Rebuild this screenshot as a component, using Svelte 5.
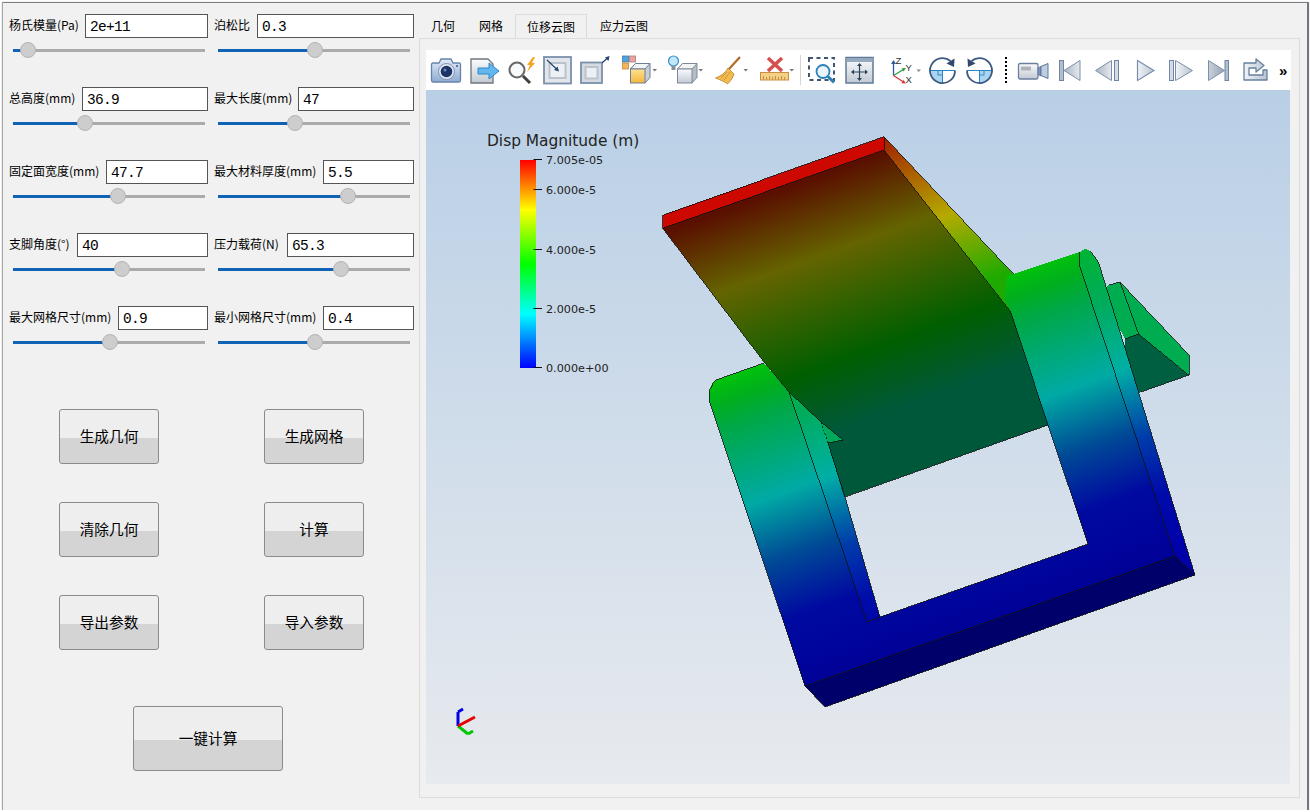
<script lang="ts">
	const fields = [
		[
			{ label: '杨氏模量(Pa)', w: 69, value: '2e+11', pos: 8 },
			{ label: '泊松比', w: 36, value: '0.3', pos: 50.5 }
		],
		[
			{ label: '总高度(mm)', w: 66, value: '36.9', pos: 37.5 },
			{ label: '最大长度(mm)', w: 77, value: '47', pos: 40.2 }
		],
		[
			{ label: '固定面宽度(mm)', w: 90, value: '47.7', pos: 54.7 },
			{ label: '最大材料厚度(mm)', w: 102, value: '5.5', pos: 67.7 }
		],
		[
			{ label: '支脚角度(°)', w: 61, value: '40', pos: 56.8 },
			{ label: '压力载荷(N)', w: 66, value: '65.3', pos: 64 }
		],
		[
			{ label: '最大网格尺寸(mm)', w: 102, value: '0.9', pos: 50.5 },
			{ label: '最小网格尺寸(mm)', w: 102, value: '0.4', pos: 50.5 }
		]
	];
	const actions = ['生成几何', '生成网格', '清除几何', '计算', '导出参数', '导入参数'];
	const tabs = ['几何', '网格', '位移云图', '应力云图'];
	const ticks = [
		{ y: 159, text: '7.005e-05' },
		{ y: 189, text: '6.000e-5' },
		{ y: 249, text: '4.000e-5' },
		{ y: 308, text: '2.000e-5' },
		{ y: 367, text: '0.000e+00' }
	];
</script>

<svg class="defs" width="0" height="0" aria-hidden="true">
	<defs>
		<linearGradient id="gGray" x1="0" y1="0" x2="0" y2="1">
			<stop offset="0" stop-color="#fbfcfd" /><stop offset="1" stop-color="#c2c9d3" />
		</linearGradient>
		<linearGradient id="gSide" x1="0" y1="0" x2="1" y2="0">
			<stop offset="0" stop-color="#f2f4f7" /><stop offset="1" stop-color="#b9c3d0" />
		</linearGradient>
		<linearGradient id="gDark" x1="0" y1="0" x2="1" y2="0">
			<stop offset="0" stop-color="#aab4c2" /><stop offset="1" stop-color="#e6eaef" />
		</linearGradient>
		<linearGradient id="gDarkR" x1="0" y1="0" x2="1" y2="0">
			<stop offset="0" stop-color="#c9d0da" /><stop offset="1" stop-color="#97a4b6" />
		</linearGradient>
		<linearGradient id="gCam" x1="0" y1="0" x2="0" y2="1">
			<stop offset="0" stop-color="#e2ebf6" /><stop offset="1" stop-color="#8fabd2" />
		</linearGradient>
		<linearGradient id="gYel" x1="0" y1="0" x2="0" y2="1">
			<stop offset="0" stop-color="#ffe294" /><stop offset="1" stop-color="#f6b63c" />
		</linearGradient>
	</defs>
</svg>

<div class="window">
	<aside class="side">
		{#each fields as row}
			<div class="param-row">
				{#each row as f}
					<div class="param">
						<div class="param-head">
							<span class="param-label" style={`width: ${f.w}px`}>{f.label}</span>
							<input class="param-input" value={f.value} readonly />
						</div>
						<div class="slider">
							<div class="slider-fill" style={`width: ${f.pos}%`}></div>
							<div class="slider-thumb" style={`left: ${f.pos}%`}></div>
						</div>
					</div>
				{/each}
			</div>
		{/each}

		<div class="actions">
			{#each actions as a}
				<button class="btn">{a}</button>
			{/each}
		</div>
		<button class="btn big">一键计算</button>
	</aside>

	<main class="main">
		<div class="tabs">
			{#each tabs as t, i}
				<div class="tab" class:active={i === 2}>{t}</div>
			{/each}
		</div>
		<div class="pane">
			<div class="toolbar">
				<!-- camera -->
				<svg class="ic" viewBox="0 0 37 30">
					<path d="M5 8h6l2-4h10l2 4h6a1.5 1.5 0 0 1 1.5 1.5v16a1.5 1.5 0 0 1-1.5 1.500H5a1.500 1.500 0 0 1-1.500-1.500v-16A1.500 1.500 0 0 1 5 8z" fill="url(#gCam)" stroke="#6584ad" stroke-width="1.300" />
					<circle cx="18.500" cy="16.500" r="8" fill="#dfe7f1" stroke="#7d93b3" />
					<circle cx="18.500" cy="16.500" r="5.800" fill="#1d3566" />
					<circle cx="17" cy="15" r="1.500" fill="#6d8bc0" />
					<circle cx="29" cy="11" r="1" fill="#39517c" />
				</svg>
				<!-- save data -->
				<svg class="ic" viewBox="0 0 37 30">
					<path d="M6 4h17l5 5v19H6z" fill="url(#gGray)" stroke="#6f757d" stroke-width="1.300" />
					<path d="M13 13h11V8l10 8-10 8v-5H13z" fill="#62b7ee" stroke="#2f86c5" />
				</svg>
				<!-- zoom to data -->
				<svg class="ic" viewBox="0 0 37 30">
					<circle cx="15" cy="15" r="7.500" fill="#f7f8f9" stroke="#666" stroke-width="2" />
					<path d="M21 21l7 7" stroke="#3f3f3f" stroke-width="3" />
					<path d="M31 2l-6 8h3l-3 7 8-9h-3l3-6z" fill="#f6a41f" />
				</svg>
				<!-- box in -->
				<svg class="ic" viewBox="0 0 37 30">
					<rect x="5" y="2" width="27" height="26.500" fill="#e2e6eb" stroke="#7b90ab" stroke-width="1.800" />
					<rect x="10.500" y="8" width="16" height="15" fill="#eef1f4" stroke="#b9c2cd" stroke-width="2" />
					<path d="M8 5l10 9.500" stroke="#24466f" stroke-width="1.200" />
					<path d="M20 16.500l-5-1.500 3.500-3.500z" fill="#24466f" />
				</svg>
				<!-- box out -->
				<svg class="ic" viewBox="0 0 37 30">
					<rect x="5" y="7.500" width="21" height="20.500" fill="#d6dbe2" stroke="#7b90ab" stroke-width="1.800" />
					<rect x="9.500" y="12" width="12" height="11.500" fill="#eceff3" stroke="#b9c2cd" stroke-width="2" />
					<path d="M26 8l6-5.500" stroke="#24466f" stroke-width="1.200" />
					<path d="M33.500 1l-1 5-3.500-3.500z" fill="#24466f" />
				</svg>
				<!-- colour box -->
				<svg class="ic wide" viewBox="0 0 46 30">
					<rect x="9.500" y="1" width="6" height="6" fill="#4fa3de" stroke="#3b7fb0" stroke-width=".8" />
					<rect x="16.500" y="1" width="6" height="6" fill="#e9a3a3" stroke="#b07a7a" stroke-width=".8" />
					<rect x="9.500" y="8" width="6" height="6" fill="#f3b559" stroke="#c28a3b" stroke-width=".8" />
					<path d="M17.500 14l5-5.500H37v14L32 28z" fill="#c9cfd8" stroke="#6d7f96" />
					<path d="M17.500 14l5-5.500H37L32 14z" fill="#f3f4f6" stroke="#6d7f96" />
					<rect x="17.500" y="14" width="14.500" height="14" fill="url(#gYel)" stroke="#6d7f96" />
					<path d="M39.500 14h4.500l-2.250 2.500z" fill="#777" />
				</svg>
				<!-- light box -->
				<svg class="ic wide" viewBox="0 0 46 30">
					<circle cx="14.500" cy="6" r="5" fill="#c3e6fb" stroke="#3a91cc" stroke-width="1.200" />
					<rect x="12.500" y="11" width="4" height="4" fill="#8a8f96" />
					<path d="M18.500 14l5-5.500H38v14L33 28z" fill="#b5bcc6" stroke="#7d8998" />
					<path d="M18.500 14l5-5.500H38L33 14z" fill="#f3f4f6" stroke="#7d8998" />
					<rect x="18.500" y="14" width="14.500" height="14" fill="url(#gGray)" stroke="#7d8998" />
					<path d="M39.500 14h4.500l-2.250 2.500z" fill="#777" />
				</svg>
				<!-- broom -->
				<svg class="ic wide" viewBox="0 0 46 30">
					<path d="M35 2L24 14" stroke="#b16b27" stroke-width="2.200" />
					<path d="M23 13l6 6c-1 3-3 7-6.500 10-2-2-7-4-12-6 5-2 10-5 12.500-10z" fill="#f1bb50" stroke="#b9822e" stroke-width=".8" />
					<path d="M25 17l-6 8M22 17l-6 6" stroke="#c48c33" stroke-width=".8" />
					<path d="M38.500 14h4.500l-2.250 2.500z" fill="#777" />
				</svg>
				<!-- ruler -->
				<svg class="ic wide" viewBox="0 0 46 30">
					<path d="M17 3l14 13M31 3L17 16" stroke="#d4504c" stroke-width="3.600" />
					<rect x="9.500" y="17.500" width="28" height="7.500" fill="#f4cf86" stroke="#cb8f41" />
					<path d="M12.500 21v3.500M15.500 22v2.500M18.500 21v3.500M21.500 22v2.500M24.500 21v3.500M27.500 22v2.500M30.500 21v3.500M33.500 22v2.500" stroke="#b67c33" stroke-width=".8" />
					<path d="M38.500 14h4.500l-2.250 2.500z" fill="#777" />
				</svg>
				<span class="sep"></span>
				<!-- zoom box -->
				<svg class="ic" viewBox="0 0 37 30">
					<rect x="5" y="3" width="25" height="22" fill="none" stroke="#40566f" stroke-width="2" stroke-dasharray="4 3.500" />
					<circle cx="19" cy="16.500" r="6.500" fill="#e9f3fa" stroke="#2c80b8" stroke-width="1.800" />
					<path d="M24 21.500l6 6" stroke="#2c80b8" stroke-width="3" />
				</svg>
				<!-- reset -->
				<svg class="ic" viewBox="0 0 37 30">
					<rect x="5" y="2.500" width="27" height="25.500" fill="url(#gGray)" stroke="#5f7998" stroke-width="1.500" />
					<rect x="5.500" y="3" width="26" height="4" fill="#97a9bf" />
					<path d="M18.500 9.500v15M11.500 17h14" stroke="#29435f" stroke-width="1.200" />
					<path d="M18.500 8l-2.500 3h5zM18.500 26l-2.500-3h5zM10 17l3-2.500v5zM27 17l-3-2.500v5z" fill="#29435f" />
				</svg>
				<!-- axes -->
				<svg class="ic axes" viewBox="0 0 37 30">
					<path d="M6.500 20.500V8" stroke="#2c5aa8" stroke-width="1.300" />
					<path d="M6.500 5l-2.500 4h5z" fill="#2c5aa8" />
					<path d="M6.500 20.500l10-6" stroke="#2d9b3f" stroke-width="1.300" />
					<path d="M19 13l-4.500.2 2 3.300z" fill="#2d9b3f" />
					<path d="M6.500 20.500l10 6.500" stroke="#d8353a" stroke-width="1.300" />
					<path d="M19 28.500l-4.500-.3 2-3.300z" fill="#d8353a" />
					<text x="8.500" y="8.500" class="axis-label">Z</text>
					<text x="18.500" y="15.500" class="axis-label">Y</text>
					<text x="18.500" y="28" class="axis-label">X</text>
					<path d="M29.500 14.500h4.500l-2.250 2.500z" fill="#888" />
				</svg>
				<!-- rotate cw -->
				<svg class="ic" viewBox="0 0 37 30">
					<path d="M6 15.500h12.500V28A12.500 12.500 0 0 1 6 15.500z" fill="#a9d5f1" />
					<path d="M6 15.500h25M18.500 15.500V28" stroke="#2a84c4" stroke-width="1" />
					<rect x="14" y="15.500" width="4.500" height="4.500" fill="none" stroke="#2a84c4" stroke-width=".9" />
					<path d="M26.500 6A12.500 12.500 0 1 0 31 15.500" fill="none" stroke="#3d5a80" stroke-width="1.800" />
					<path d="M30.500 3.500l-.5 8.500-7.500-3.500z" fill="#31496c" />
				</svg>
				<!-- rotate ccw -->
				<svg class="ic" viewBox="0 0 37 30">
					<path d="M31 15.500H18.500V28A12.500 12.500 0 0 0 31 15.500z" fill="#a9d5f1" />
					<path d="M6 15.500h25M18.500 15.500V28" stroke="#2a84c4" stroke-width="1" />
					<rect x="18.500" y="15.500" width="4.500" height="4.500" fill="none" stroke="#2a84c4" stroke-width=".9" />
					<path d="M10.500 6A12.500 12.500 0 1 1 6 15.500" fill="none" stroke="#3d5a80" stroke-width="1.800" />
					<path d="M6.500 3.500l.5 8.500 7.500-3.500z" fill="#31496c" />
				</svg>
				<span class="dots"></span>
				<!-- video camera -->
				<svg class="ic" viewBox="0 0 37 30">
					<rect x="3.500" y="8.500" width="19.500" height="15.500" rx="1.500" fill="url(#gGray)" stroke="#6a7f9f" stroke-width="1.300" />
					<rect x="6" y="11.500" width="10" height="4" fill="#aeb3b9" />
					<path d="M23 13l3-1.500v9.500l-3-1.500z" fill="#7d95b8" stroke="#6a7f9f" />
					<path d="M26 11.500l7-3v15l-7-3z" fill="#bfcde0" stroke="#5e7598" />
				</svg>
				<!-- first -->
				<svg class="ic" viewBox="0 0 37 30">
					<rect x="7.500" y="5.500" width="4" height="20" fill="#b3bdcb" stroke="#6f85a4" />
					<path d="M12 15.500l16-10v20z" fill="url(#gDark)" stroke="#7b8fac" />
				</svg>
				<!-- previous -->
				<svg class="ic" viewBox="0 0 37 30">
					<path d="M6.500 15.500l16-10v20z" fill="url(#gDark)" stroke="#7b8fac" />
					<rect x="25.500" y="5.500" width="4" height="20" fill="#d5dbe4" stroke="#6f85a4" />
				</svg>
				<!-- play -->
				<svg class="ic" viewBox="0 0 37 30">
					<path d="M11.500 5.500l16.500 10-16.500 10z" fill="url(#gSide)" stroke="#7b8fac" stroke-width="1.200" />
				</svg>
				<!-- next -->
				<svg class="ic" viewBox="0 0 37 30">
					<rect x="6.500" y="5.500" width="4" height="20" fill="#d5dbe4" stroke="#6f85a4" />
					<path d="M12.500 5.500l17 10-17 10z" fill="url(#gSide)" stroke="#7b8fac" />
				</svg>
				<!-- last -->
				<svg class="ic" viewBox="0 0 37 30">
					<path d="M8.500 5.500l16 10-16 10z" fill="url(#gDarkR)" stroke="#7b8fac" />
					<rect x="25" y="5.500" width="3.500" height="20" fill="#b3bdcb" stroke="#6f85a4" />
				</svg>
				<!-- loop -->
				<svg class="ic" viewBox="0 0 37 30">
					<path d="M7 25V8h12V4l8 6.500-8 6.500v-4h-7v7h14v-5h4v10z" fill="url(#gSide)" stroke="#66809f" stroke-width="1.300" stroke-linejoin="round" />
				</svg>
				<span class="more">»</span>
			</div>

			<div class="view">
				<svg class="scene" viewBox="426 90 865 694">
					<defs>
						<linearGradient id="bar" x1="0" y1="0" x2="0" y2="1">
							<stop offset="0" stop-color="#ff0000" />
							<stop offset=".24" stop-color="#ffff00" />
							<stop offset=".5" stop-color="#00ff00" />
							<stop offset=".74" stop-color="#00ffff" />
							<stop offset="1" stop-color="#0000ff" />
						</linearGradient>
						<linearGradient id="front" gradientUnits="userSpaceOnUse" x1="884" y1="137" x2="1054" y2="607">
							<stop offset=".32" stop-color="rgb(0,205,0)" />
							<stop offset=".39" stop-color="rgb(0,175,30)" />
							<stop offset=".44" stop-color="rgb(0,168,70)" />
							<stop offset=".6" stop-color="rgb(0,170,165)" />
							<stop offset=".72" stop-color="rgb(0,75,150)" />
							<stop offset=".84" stop-color="rgb(0,10,160)" />
							<stop offset="1" stop-color="rgb(0,0,150)" />
						</linearGradient>
						<linearGradient id="strip" gradientUnits="userSpaceOnUse" x1="884" y1="137" x2="1054" y2="607">
							<stop offset=".34" stop-color="rgb(0,180,50)" />
							<stop offset=".46" stop-color="rgb(0,172,90)" />
							<stop offset=".6" stop-color="rgb(0,175,165)" />
							<stop offset=".74" stop-color="rgb(0,60,170)" />
							<stop offset=".86" stop-color="rgb(0,10,170)" />
							<stop offset="1" stop-color="rgb(0,0,170)" />
						</linearGradient>
						<linearGradient id="plate" gradientUnits="userSpaceOnUse" x1="884" y1="137" x2="1054" y2="607">
							<stop offset=".03" stop-color="rgb(90,15,0)" />
							<stop offset=".18" stop-color="rgb(100,100,0)" />
							<stop offset=".39" stop-color="rgb(0,95,0)" />
							<stop offset=".52" stop-color="rgb(0,88,58)" />
							<stop offset="1" stop-color="rgb(0,88,58)" />
						</linearGradient>
						<linearGradient id="edge" gradientUnits="userSpaceOnUse" x1="884" y1="137" x2="1054" y2="607">
							<stop offset="0" stop-color="rgb(160,30,0)" />
							<stop offset=".08" stop-color="rgb(170,90,0)" />
							<stop offset=".19" stop-color="rgb(180,170,0)" />
							<stop offset=".26" stop-color="rgb(110,170,0)" />
							<stop offset=".34" stop-color="rgb(30,170,0)" />
						</linearGradient>
					</defs>

					<g shape-rendering="crispEdges">
						<!-- tab behind the right arm -->
						<path d="M1100 292L1109 285L1120 282L1189 355V375L1138.600 334L1125 339Z" fill="rgb(0,172,80)" />
						<path d="M1125 339L1138.600 334L1188.600 375L1141 392L1120 400Z" fill="rgb(0,95,65)" />
						<path d="M1109 285L1120 282L1189 355V375L1141 392" fill="none" stroke="#111" stroke-width=".8" />
						<path d="M1120 282L1138.600 334L1188.600 375M1138.600 334L1125 339" fill="none" stroke="#111" stroke-width=".8" />

						<!-- left tab -->
						<path d="M789 392L821 422L843 440L828 443L845 497L880 617L867 622Z" fill="url(#strip)" />

						<!-- plate -->
						<path d="M662.500 228L884 150L1010.700 311.700L1048 425L844 497L828 443L843 440L821 422L789 392L764 362Z" fill="url(#plate)" />
						<path d="M821 422L843 440L828 443Z" fill="rgb(0,170,90)" />
						<path d="M821 422L843 440L828 443" fill="none" stroke="#111" stroke-width=".8" />
						<path d="M821 422L828 443" fill="none" stroke="#111" stroke-width=".8" stroke-dasharray="2 2" />

						<!-- U frame -->
						<path d="M709 400Q708 386 716 380L764 363L789 392L867 622L880 617L1088 544L1048 425L1010.700 311.700L1005 300L1007 276L1080 252L1080 267L1175 556L805 686Z" fill="url(#front)" />
						<path d="M1080 252Q1085 247 1090 251Q1096 257 1099 264L1195 575L1175 556L1080 267Z" fill="url(#strip)" />
						<path d="M805 686L825 707L1195 575L1175 556Z" fill="#00006b" />

						<!-- top plate edges, drawn over the frame -->
						<path d="M662.500 215L884 136.700V150L662.500 228Z" fill="rgb(205,8,0)" />
						<path d="M884 136.700L1013.500 274L1007 276L1005 300L1010.700 311.700L884 150Z" fill="url(#edge)" />

						<!-- outlines -->
						<g fill="none" stroke="#111" stroke-width=".8">
							<path d="M662.500 228V215L884 136.700L1013.500 274" />
							<path d="M662.500 228L884 150V136.700M884 150L1010.700 311.700L1048 425L1088 544L880 617L867 622L789 392" />
							<path d="M662.500 228L764 362L789 392L821 422" />
							<path d="M764 363L716 380Q708 386 709 400L805 686L825 707L1195 575L1175 556L805 686" />
							<path d="M1080 267L1175 556M1080 252Q1078 258 1080 267M1090 251Q1096 257 1099 264L1195 575" />
							<path d="M845 497L880 617M845 497L1048 425M828 443L845 497" />
						</g>
					</g>

					<!-- scalar bar -->
					<text x="487" y="146" class="bar-title">Disp Magnitude (m)</text>
					<rect x="520" y="160" width="16" height="208" fill="url(#bar)" />
					{#each ticks as t}
						<path d={`M533.500 ${t.y}.5H542`} stroke="#111" stroke-width="1" />
						<text x="546" y={t.y + 4.500} class="bar-label">{t.text}</text>
					{/each}

					<!-- orientation triad -->
					<g fill="none" stroke-width="3">
						<path d="M458 726V712M458 712L463 709" stroke="#0000e6" />
						<path d="M458 726L468 734M468 734L473 731" stroke="#00c800" />
						<path d="M458 726L475 717" stroke="#e60000" />
					</g>
				</svg>
			</div>
		</div>
	</main>
</div>

<style>
	:global(body) {
		margin: 0;
		background: #fff;
		overflow: hidden;
	}

	.defs {
		position: absolute;
	}

	.window {
		box-sizing: border-box;
		display: flex;
		width: 1306px;
		height: 808px;
		margin: 2px 0 0 3px;
		background: #f1f1f1;
		border-top: 1px solid #7c8086;
		border-right: 2px solid #74767d;
		box-shadow: -1px 0 1px #a5a5a5, 0 1px 1px #b5b5b5;
		font-family: 'Noto Sans CJK SC', 'Liberation Sans', sans-serif;
		color: #000;
	}

	.side {
		box-sizing: border-box;
		width: 416px;
		flex: none;
		padding: 11px 0 0 6px;
	}

	.param-row {
		display: flex;
		gap: 6px;
		height: 73px;
	}

	.param {
		width: 199px;
	}

	.param + .param {
		width: 200px;
	}

	.param-head {
		display: flex;
		align-items: center;
		gap: 7px;
		height: 24px;
	}

	.param-label {
		flex: none;
		padding-bottom: 4px;
		font-size: 12px;
		white-space: nowrap;
	}

	.param-input {
		box-sizing: border-box;
		flex: 1;
		min-width: 0;
		height: 24px;
		padding: 1px 4px 0;
		border: 1px solid #555;
		border-radius: 0;
		background: #fff;
		font-family: 'Liberation Mono', monospace;
		font-size: 14.500px;
		letter-spacing: -0.700px;
		color: #000;
		outline: none;
	}

	.slider {
		position: relative;
		width: 192px;
		height: 3px;
		margin: 10.500px 0 0 4px;
		background: #ababab;
	}

	.slider-fill {
		height: 100%;
		background: #0f63b5;
	}

	.slider-thumb {
		position: absolute;
		top: 50%;
		box-sizing: border-box;
		width: 16px;
		height: 16px;
		border: 1px solid #b4b4b4;
		border-radius: 50%;
		background: #cdcdcd;
		transform: translate(-50%, -50%);
	}

	.actions {
		display: grid;
		grid-template-columns: 100px 100px;
		column-gap: 105px;
		row-gap: 38px;
		margin: 30px 0 0 50px;
	}

	.btn {
		display: block;
		box-sizing: border-box;
		width: 100px;
		height: 55px;
		padding: 0 0 3px;
		border: 1px solid #8b8b8b;
		border-radius: 3px;
		background: linear-gradient(#eeeeee 0 52%, #d4d4d4 52% 100%);
		font-family: inherit;
		font-size: 14.670px;
		color: #000;
	}

	.big {
		width: 150px;
		height: 65px;
		margin: 56px 0 0 124px;
		background: linear-gradient(#eeeeee 0 53%, #d4d4d4 53% 100%);
	}

	.main {
		flex: 1;
		min-width: 0;
		padding: 11px 7px 0 0;
	}

	.tabs {
		display: flex;
		height: 24px;
	}

	.tab {
		box-sizing: border-box;
		width: 48px;
		height: 24px;
		font-size: 12px;
		line-height: 24px;
		text-align: center;
		white-space: nowrap;
	}

	.tab:nth-child(3),
	.tab:nth-child(4) {
		width: 72px;
	}

	.tab:nth-child(4) {
		margin-left: 1px;
	}

	.tab.active {
		border: 1px solid #dcdcdc;
		border-bottom: none;
		line-height: 23px;
	}

	.pane {
		box-sizing: border-box;
		height: 760px;
		padding: 11px 9px 12px 6px;
		border: 1px solid #dcdcdc;
	}

	.toolbar {
		display: flex;
		align-items: center;
		box-sizing: border-box;
		width: 865px;
		height: 40px;
		padding-left: 2px;
		background: #fff;
	}

	.ic {
		display: block;
		flex: none;
		width: 37px;
		height: 30px;
	}

	.wide {
		width: 46px;
	}

	.axes {
		margin-left: 9px;
	}

	.axis-label {
		font-family: 'Liberation Sans', sans-serif;
		font-size: 9.500px;
		fill: #333;
	}

	.sep {
		flex: none;
		width: 1px;
		height: 30px;
		margin: 0 3px;
		background: #d4d4d4;
	}

	.dots {
		flex: none;
		width: 2px;
		height: 26px;
		margin: 0 8px 0 7px;
		background: repeating-linear-gradient(#000 0 2px, transparent 2px 4px);
	}

	.more {
		flex: none;
		width: 18px;
		padding-left: 5px;
		font-family: 'Liberation Sans', sans-serif;
		font-size: 15px;
		font-weight: 700;
		line-height: 1;
	}

	.view {
		height: 694px;
		background: linear-gradient(#b9cfe6, #e7eaee);
	}

	.scene {
		display: block;
		width: 865px;
		height: 694px;
	}

	.bar-title {
		font-family: 'DejaVu Sans', sans-serif;
		font-size: 15.400px;
		fill: #222;
	}

	.bar-label {
		font-family: 'DejaVu Sans', sans-serif;
		font-size: 11.200px;
		fill: #222;
	}
</style>
